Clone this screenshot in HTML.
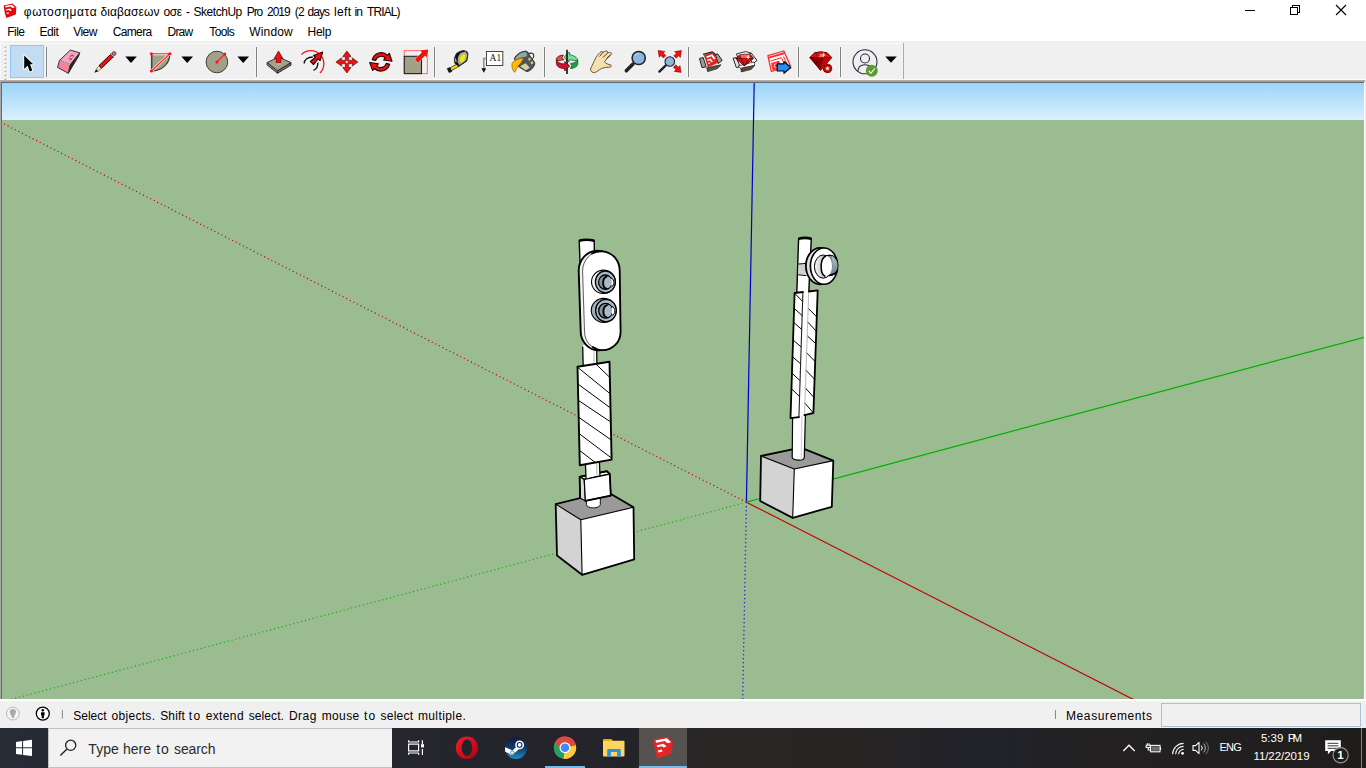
<!DOCTYPE html>
<html lang="en"><head><meta charset="utf-8"><title>SketchUp</title>
<style>
*{box-sizing:border-box;margin:0;padding:0}
html,body{width:1366px;height:768px;overflow:hidden;background:#fff}
body{position:relative;font-family:"Liberation Sans","DejaVu Sans",sans-serif;font-size:12px;color:#000}
.abs{position:absolute}
.t{position:absolute;white-space:nowrap;line-height:1}
#titlebar{left:0;top:0;width:1366px;height:22px;background:#fff}
#menubar{left:0;top:22px;width:1366px;height:19px;background:#fff}
#toolbar{left:0;top:41px;width:1366px;height:38px;background:#f0f0f0}
#vp{left:0;top:80px;width:1366px;height:621px;background:#fff}
#status{left:0;top:701px;width:1366px;height:27px;background:#f0f0f0}
#taskbar{left:0;top:728px;width:1366px;height:40px;background:linear-gradient(90deg,#272b35 0,#24262e 28%,#242329 46%,#2a2625 52%,#282423 62%,#21232a 72%,#232122 80%,#1f1c1c 100%)}
svg{position:absolute;overflow:visible}

</style></head><body>
<div id="titlebar" class="abs"></div>
<svg style="left:0;top:0" width="24" height="22" viewBox="0 0 24 22">
<g id="sulogo">
<polygon points="3.6,5.4 12.4,3.6 16.4,7.2 15.8,14.6 6.4,18 4.9,13.4" fill="#e00b10"/>
<polygon points="5.2,6.1 11.9,4.8 14.9,7.4 12.2,8 10.6,6.6 5.6,7.6" fill="#fff"/>
<polygon points="5.9,9.4 9.9,8.6 11.9,10.4 9.9,10.9 9,10 6.2,10.6" fill="#fff"/>
<polygon points="6.4,12.7 8.6,12.2 9.1,13.4 6.8,14" fill="#fff"/>
</g>
</svg>
<div class="abs" style="left:1245px;top:10px;width:10px;height:1px;background:#000"></div>
<div class="abs" style="left:1292px;top:5px;width:8px;height:8px;border:1px solid #000"></div>
<div class="abs" style="left:1290px;top:7px;width:8px;height:8px;border:1px solid #000;background:#fff"></div>
<svg style="left:1336px;top:5px" width="10" height="10" viewBox="0 0 10 10"><path d="M0,0 L10,10 M10,0 L0,10" stroke="#000" stroke-width="1.1" fill="none"/></svg>

<span class="t" style="left:23.8px;top:6.1px;font-size:12px;letter-spacing:0.57px;color:#000;">φωτοσηματα</span>
<span class="t" style="left:100.6px;top:6.1px;font-size:12px;letter-spacing:0.069px;color:#000;">διαβασεων</span>
<span class="t" style="left:163.4px;top:6.1px;font-size:12px;letter-spacing:-0.419px;color:#000;">οσε</span>
<span class="t" style="left:186.0px;top:6.1px;font-size:12px;letter-spacing:0px;color:#000;">-</span>
<span class="t" style="left:193.5px;top:6.1px;font-size:12px;letter-spacing:-0.462px;color:#000;">SketchUp</span>
<span class="t" style="left:246.7px;top:6.1px;font-size:12px;letter-spacing:-1.044px;color:#000;">Pro</span>
<span class="t" style="left:267.0px;top:6.1px;font-size:12px;letter-spacing:-1.034px;color:#000;">2019</span>
<span class="t" style="left:294.7px;top:6.1px;font-size:12px;letter-spacing:-0.672px;color:#000;">(2</span>
<span class="t" style="left:307.6px;top:6.1px;font-size:12px;letter-spacing:-0.986px;color:#000;">days</span>
<span class="t" style="left:334.0px;top:6.1px;font-size:12px;letter-spacing:0.328px;color:#000;">left</span>
<span class="t" style="left:354.6px;top:6.1px;font-size:12px;letter-spacing:-0.944px;color:#000;">in</span>
<span class="t" style="left:367.0px;top:6.1px;font-size:12px;letter-spacing:-0.883px;color:#000;">TRIAL)</span>
<div id="menubar" class="abs"></div>
<span class="t" style="left:7.2px;top:26.2px;font-size:12px;letter-spacing:-0.515px;color:#000;">File</span>
<span class="t" style="left:39.5px;top:26.2px;font-size:12px;letter-spacing:-0.463px;color:#000;">Edit</span>
<span class="t" style="left:73.3px;top:26.2px;font-size:12px;letter-spacing:-0.566px;color:#000;">View</span>
<span class="t" style="left:112.7px;top:26.2px;font-size:12px;letter-spacing:-0.638px;color:#000;">Camera</span>
<span class="t" style="left:167.5px;top:26.2px;font-size:12px;letter-spacing:-0.772px;color:#000;">Draw</span>
<span class="t" style="left:209.3px;top:26.2px;font-size:12px;letter-spacing:-0.629px;color:#000;">Tools</span>
<span class="t" style="left:249.3px;top:26.2px;font-size:12px;letter-spacing:0.142px;color:#000;">Window</span>
<span class="t" style="left:307.6px;top:26.2px;font-size:12px;letter-spacing:-0.296px;color:#000;">Help</span>
<div id="toolbar" class="abs"></div>
<div class="abs" style="left:0;top:79px;width:1366px;height:1px;background:#fbfbfb"></div>
<div class="abs" style="left:0;top:43px;width:903px;height:1px;background:#f7f9fc"></div>
<div class="abs" style="left:10px;top:45px;width:34px;height:33px;background:#c2ddf3;border:1px solid #90c8f6"></div>
<svg style="left:0;top:42px" width="1366" height="38" viewBox="0 42 1366 38">
<defs>
<linearGradient id="gemg" x1="0" y1="0" x2="1" y2="0"><stop offset="0" stop-color="#7a0000"/><stop offset="1" stop-color="#d01414"/></linearGradient>
</defs>
<!-- grip -->
<g fill="#ababab"><path d="M6.100,45.8 V48 H3.900 Z"/><path d="M6.100,49.8 V52 H3.900 Z"/><path d="M6.100,53.8 V56 H3.900 Z"/><path d="M6.100,57.8 V60 H3.900 Z"/><path d="M6.100,61.8 V64 H3.900 Z"/><path d="M6.100,65.8 V68 H3.900 Z"/><path d="M6.100,69.8 V72 H3.900 Z"/><path d="M6.100,73.8 V76 H3.900 Z"/><path d="M6.100,77.8 V80 H3.900 Z"/></g>
<g fill="#fff"><path d="M3.400,47.4 L5.600,45.2 L5.600,46.0 L3.900,47.7 Z"/><path d="M3.400,51.4 L5.600,49.2 L5.600,50.0 L3.900,51.7 Z"/><path d="M3.400,55.4 L5.600,53.2 L5.600,54.0 L3.900,55.7 Z"/><path d="M3.400,59.4 L5.600,57.2 L5.600,58.0 L3.900,59.7 Z"/><path d="M3.400,63.4 L5.600,61.2 L5.600,62.0 L3.900,63.7 Z"/><path d="M3.400,67.4 L5.600,65.2 L5.600,66.0 L3.900,67.7 Z"/><path d="M3.400,71.4 L5.600,69.2 L5.600,70.0 L3.900,71.7 Z"/><path d="M3.400,75.4 L5.600,73.2 L5.600,74.0 L3.900,75.7 Z"/><path d="M3.400,79.4 L5.600,77.2 L5.600,78.0 L3.900,79.7 Z"/></g>
<rect x="0" y="44" width="1" height="35" fill="#f6f8fc"/>
<rect x="45" y="47" width="3" height="30" fill="#f7f7f7"/><rect x="46" y="47" width="1" height="30" fill="#808080"/><rect x="255" y="47" width="3" height="30" fill="#f7f7f7"/><rect x="256" y="47" width="1" height="30" fill="#808080"/><rect x="433" y="47" width="3" height="30" fill="#f7f7f7"/><rect x="434" y="47" width="1" height="30" fill="#808080"/><rect x="543" y="47" width="3" height="30" fill="#f7f7f7"/><rect x="544" y="47" width="1" height="30" fill="#808080"/><rect x="687" y="47" width="3" height="30" fill="#f7f7f7"/><rect x="688" y="47" width="1" height="30" fill="#808080"/><rect x="797" y="47" width="3" height="30" fill="#f7f7f7"/><rect x="798" y="47" width="1" height="30" fill="#808080"/><rect x="839" y="47" width="3" height="30" fill="#f7f7f7"/><rect x="840" y="47" width="1" height="30" fill="#808080"/>
<rect x="902" y="44" width="1" height="35" fill="#f6f6f6"/><rect x="903" y="43" width="1" height="36" fill="#aaaaaa"/>
<!-- select cursor -->
<path d="M24.200,55.400 L33.200,64.300 L30.100,64.300 L32.200,70.500 L29.800,71.400 L27.600,65.800 L24.200,69 Z" fill="#000" stroke="#fff" stroke-width="1.800" stroke-linejoin="round" paint-order="stroke"/>
<!-- eraser -->
<g stroke="#222" stroke-width="0.900" stroke-linejoin="round">
<polygon points="70.100,64.800 79.700,52.800 78.800,55.800 68.300,73.300" fill="#222"/>
<polygon points="59.500,60.400 70.400,50.100 79.700,52.800 70.100,64.800" fill="#f9a3bf"/>
<polygon points="59.500,60.400 70.100,64.800 68.300,73.300 57.500,67.400" fill="#f8819b"/>
</g>
<path d="M59.800,60.600 L70.100,64.900" stroke="#fde0e8" stroke-width="0.800"/>
<path d="M70.500,55 l3.500,1.200 M69.500,57 l4,-2.500 M68.500,58.200 l3.500,1.200 M72.500,57.500 l-3,3" stroke="#8a3050" stroke-width="0.700" fill="none"/>
<!-- pencil -->
<g>
<path d="M94.300,72.800 L96.100,69.300 L98.300,71.300 Z" fill="#111"/>
<path d="M96.100,69.300 L99,65.600 L101.600,68.100 L98.300,71.300 Z" fill="#e6e2a0" stroke="#333" stroke-width="0.500"/>
<path d="M99,65.600 L110.700,54.300 L113.300,56.900 L101.600,68.100 Z" fill="#f01010" stroke="#300" stroke-width="1"/>
<path d="M110.700,54.300 L112,53.100 L114.600,55.700 L113.300,56.900 Z" fill="#f4f4f4" stroke="#333" stroke-width="0.600"/>
<circle cx="114.100" cy="53.500" r="1.900" fill="#e0687a" stroke="#333" stroke-width="0.700"/>
</g>
<path transform="translate(131 59.700)" d="M-5.800,-3.200 H5.800 L0,3.200 Z" fill="#000"/>
<!-- arc -->
<path d="M151.400,55.200 L169.600,55.200 A18.300,16.400 0 0 1 151.400,71 Z" fill="#a3a08a"/>
<path d="M169.700,55.400 A18.200,16.300 0 0 1 151.800,71" fill="none" stroke="#333" stroke-width="1.100"/>
<path d="M151.700,55 V70.500" fill="none" stroke="#444" stroke-width="1.600"/>
<path d="M169.900,53.700 L151.400,71" fill="none" stroke="#f4ecec" stroke-width="2.600"/>
<path d="M151.400,53.700 H169.900 L151.400,71" fill="none" stroke="#ff2020" stroke-width="1.100"/>
<circle cx="151.400" cy="53.700" r="1.500" fill="#ff1010"/><circle cx="169.900" cy="53.700" r="1.500" fill="#ff1010"/><circle cx="151.400" cy="71" r="1.500" fill="#ff1010"/>
<path transform="translate(187.200 59.700)" d="M-5.800,-3.200 H5.800 L0,3.200 Z" fill="#000"/>
<!-- circle -->
<circle cx="216.900" cy="62" r="10.800" fill="#a3a08a" stroke="#333" stroke-width="0.900"/>
<path d="M216.900,62 L224.800,54" stroke="#ff2020" stroke-width="1.100"/>
<circle cx="216.900" cy="62" r="1.500" fill="#ff1010"/><circle cx="224.800" cy="54" r="1.500" fill="#ff1010"/>
<path transform="translate(243.200 59.700)" d="M-5.800,-3.200 H5.800 L0,3.200 Z" fill="#000"/>
<!-- push pull -->
<g stroke="#222" stroke-width="0.900" stroke-linejoin="round">
<polygon points="267.100,62.500 277.500,70.800 277.500,73.300 267.100,65" fill="#8a8870"/>
<polygon points="277.500,70.800 291,62.600 291,65.100 277.500,73.300" fill="#77755e"/>
<polygon points="267.100,62.500 278.600,57.200 291,62.600 277.500,70.800" fill="#a3a08a"/>
</g>
<path d="M278.500,51.100 L282.900,58.500 L280.700,58.500 L280.700,63.200 L276.400,63.200 L276.400,58.500 L274.200,58.500 Z" fill="#f01010" stroke="#600" stroke-width="0.700"/>
<path d="M276,63.800 H281" stroke="#e8e8e0" stroke-width="0.800"/>
<!-- follow me -->
<path d="M301.500,54.500 A13,13 0 1 1 320,73" fill="none" stroke="#f01820" stroke-width="1.300"/>
<path d="M304.200,63.400 C304.200,59.500 308,57 312.800,57" fill="none" stroke="#111" stroke-width="1.400"/>
<path d="M313.500,70.400 C316.500,69 318,66 317.800,62.600" fill="none" stroke="#111" stroke-width="1.400"/>
<path d="M322.700,52.100 L320.100,60.700 L318,58.800 L313.500,64.600 L310.400,61.500 L315.600,57.300 L313.500,55.600 Z" fill="#f01010" stroke="#200" stroke-width="1.100" stroke-linejoin="round"/>
<!-- move -->
<g fill="#f01010" stroke="#500" stroke-width="0.600" stroke-linejoin="round">
<path d="M346.900,51 L351,56.500 L348.400,56.500 L348.400,60.500 L352.400,60.500 L352.400,57.900 L357.900,62 L352.400,66.100 L352.400,63.500 L348.400,63.500 L348.400,67.500 L351,67.500 L346.900,73 L342.800,67.500 L345.400,67.500 L345.400,63.500 L341.400,63.500 L341.400,66.100 L335.900,62 L341.400,57.900 L341.400,60.500 L345.400,60.500 L345.400,56.500 L342.800,56.500 Z"/>
</g>
<g fill="#fff" stroke="#999" stroke-width="0.400"><rect x="342.200" y="57.300" width="2.400" height="2.400"/><rect x="349.200" y="57.300" width="2.400" height="2.400"/><rect x="342.200" y="64.300" width="2.400" height="2.400"/><rect x="349.200" y="64.300" width="2.400" height="2.400"/><rect x="345.900" y="61" width="2" height="2"/></g>
<!-- rotate -->
<g fill="#f01010" stroke="#200" stroke-width="1.100" stroke-linejoin="round">
<path d="M372.300,59.600 A9.200,9.200 0 0 1 387.600,55.300 L389.300,53.300 L392,61.300 L383.600,60 L385.300,57.900 A5.800,5.800 0 0 0 375.700,60.400 Z"/>
<path d="M389.700,64.200 A9.200,9.200 0 0 1 374.400,68.500 L372.700,70.500 L369.700,62.500 L378.400,63.800 L376.700,65.900 A5.800,5.800 0 0 0 386.300,63.400 Z"/>
</g>
<!-- scale -->
<rect x="404.300" y="50.600" width="23" height="23" fill="none" stroke="#ff6a6a" stroke-width="1"/>
<rect x="404.300" y="56.300" width="17.200" height="17.300" fill="#a3a08a" stroke="#222" stroke-width="1.100"/>
<path d="M428.100,49.400 L427,57.500 L425.100,55.600 L418,62.700 L414.800,59.500 L421.900,52.400 L420,50.500 Z" fill="#f01010" stroke="#fff" stroke-width="0.700" stroke-linejoin="round" paint-order="stroke"/>
<!-- tape -->
<g stroke-linejoin="round">
<path d="M457.200,64 L449.600,68.200 L451,70.800 L458.800,66.400 Z" fill="#f4e800" stroke="#222" stroke-width="0.800"/>
<path d="M447.200,68.600 L450,67.600 L451.800,71.600 L449,72.600 Z" fill="#111" stroke="#111" stroke-width="0.600"/>
<path d="M454.400,58.400 L456.400,53.500 Q459,51.300 463.400,50.500 L466.900,51.500 Q468,52.500 467.900,54.500 L466.900,60.900 L458.900,66.400 L454.900,63.400 Z" fill="#111" stroke="#111" stroke-width="0.800"/>
<path d="M457.900,57.400 L459.900,53.500 Q462,52 465.900,51.600 L467.300,54.500 L466.300,60.300 L459.500,65.200 L457.700,62.400 Z" fill="#a8a8a8"/>
<ellipse cx="462.600" cy="58.300" rx="2.500" ry="4.300" transform="rotate(24 462.600 58.300)" fill="#f4e800"/>
<path d="M455,58.600 L456,58.200 L456.600,62 L455.600,62.300 Z" fill="#f4e800"/>
</g>
<!-- text tool -->
<rect x="486.500" y="51.500" width="16.300" height="14" fill="#fff" stroke="#444" stroke-width="1"/>
<path d="M486.500,58.500 H483.800 V69" fill="none" stroke="#8c8c8c" stroke-width="1.500"/>
<path d="M481.400,68.300 H486.200 L483.800,72.800 Z" fill="#111"/>
<text x="489.600" y="61" font-family="Liberation Serif,serif" font-size="9.500" fill="#222">A1</text>
<!-- paint bucket -->
<g stroke-linejoin="round">
<path d="M529,53.600 C531,52.500 533.700,53.400 533.800,55.400 C533.900,56.800 533.100,58 532.500,58.700" fill="none" stroke="#222" stroke-width="1.100"/>
<path d="M514.400,58.600 C515.500,55 521,51.200 525.500,51.200 C527.500,51.200 528.300,52.500 528.600,54 L534.600,62.500 C535.500,65 531,71.500 526.600,71.600 L518.500,66.500 Z" fill="#50545a" stroke="#2a2c30" stroke-width="1"/>
<path d="M515.300,58.400 C517,55 521.500,52.300 525.200,52.300 C527.300,52.500 527.300,54.500 526.800,56.300 C523,57 518.500,58.500 516,59.500 Z" fill="#8fa8a0"/>
<path d="M520,66.300 L525.700,63.200 L529.800,67.700 L525.700,70.300 Z" fill="#ddd39a"/>
<path d="M528,58.600 L530.600,57.600 L530.800,59.800 L528.800,61 Z" fill="#cfc08a"/>
<path d="M530.400,62 L532.800,61 L533.300,63.800 L531.200,64.400 Z" fill="#cfc08a"/>
<path d="M523.600,58 C519.500,58.200 515,59.600 512.600,62.400 C510.800,65 512.600,70.800 514.600,72.300 C516,71 516.600,67.800 518.200,66 C520,64 522.600,61 523.600,58 Z" fill="#ffb800" stroke="#7a5000" stroke-width="0.600"/>
</g>
<!-- orbit -->
<g stroke-linejoin="round">
<path d="M556.300,58.500 C557.200,56.600 560,55.200 563.400,55 L561.800,57.700 L564,59.750 C561,60.300 558.500,60.800 557,60.400 Z" fill="#e2503e" stroke="#500" stroke-width="0.700"/>
<path d="M564,57.250 L568.800,52.250 L569.700,52.500 L569.700,54.750 C573.500,55.200 577.200,57.400 577.800,60.200 C576,60.700 572.500,60.200 568.800,60 L568.800,62.250 Z" fill="#72e096" stroke="#052" stroke-width="0.700"/>
<rect x="566.200" y="49.800" width="1.600" height="24.200" fill="#111"/>
<path d="M577.800,60.200 L577.800,64.300 C577.300,66.500 574.500,68.200 570.500,68.700 L571.750,65.600 L570.500,63.500 C573,63.300 576,62 577.800,60.200 Z" fill="#1fa040" stroke="#052" stroke-width="0.700"/>
<path d="M556.300,59.750 L556.500,64.300 C557,66.600 560,68.400 564.700,68.700 L564.700,71 L569.700,66 L564.700,61.400 L564.700,63.900 C561,63.800 558,62.800 556.300,59.750 Z" fill="#d01030" stroke="#400" stroke-width="0.700"/>
</g>
<!-- pan hand -->
<path d="M590.500,69 C592,66 594,61 596,57.500 C597.500,55 599.500,52.500 601.500,51.500 C602.500,51.200 603,52 602.500,52.800 C604,51.500 606,50.800 607,51.200 C608,51.500 608.200,52.300 607.500,53 C609,52.300 610.500,52.300 611.300,52.900 C612,53.500 611.500,54.300 610.800,54.800 C608.500,57 606,59.500 604.500,62 C606,63.500 608,64.500 610.500,64.800 C611.500,65 611.500,66.500 610.500,67 C607,67.500 604,67.300 601.500,68.500 C599,69.800 597,72 594.500,72.600 C592.500,72.800 590.500,71.500 590.500,69 Z" fill="#f5e1b0" stroke="#5a4526" stroke-width="0.900" stroke-linejoin="round"/>
<path d="M602.500,52.800 L599.500,56.500 M607.500,53 L603,57.500 M610.800,54.800 L606.500,58.600" stroke="#3a2c18" stroke-width="0.900" fill="none"/>
<!-- zoom -->
<path d="M633,64 L626.300,70.800" stroke="#222" stroke-width="3.500" stroke-linecap="round"/>
<circle cx="638.700" cy="58" r="6.600" fill="#8cb6de" stroke="#222" stroke-width="1.500"/>
<path d="M635,56 A4,4 0 0 1 639,53.500" stroke="#b8d6f0" stroke-width="1" fill="none"/>
<!-- zoom extents -->
<path d="M665.600,65.600 L659.400,71.600" stroke="#222" stroke-width="2.400" stroke-linecap="round"/>
<circle cx="669.800" cy="61.500" r="4.800" fill="#8cb6de" stroke="#222" stroke-width="1.100"/>
<g fill="#f01010" stroke="#600" stroke-width="0.500" stroke-linejoin="round">
<path d="M658.100,50.400 L665,51.400 L663.300,53.100 L665.800,55.600 L663.400,58 L660.900,55.500 L659.200,57.200 Z"/>
<path d="M681.400,50.500 L680.400,57.400 L678.700,55.700 L676.200,58.200 L673.800,55.800 L676.300,53.300 L674.600,51.600 Z"/>
<path d="M681.100,72.400 L674.200,71.400 L675.900,69.700 L673.400,67.200 L675.800,64.800 L678.300,67.300 L680,65.600 Z"/>
</g>
<!-- 3d warehouse -->
<g stroke-linejoin="round">
<path d="M703,54.200 L712.400,51.900 L716,54.600 L705,58" fill="#8a8878" stroke="#222" stroke-width="1.100"/>
<path d="M699.500,58.400 L703.200,57.600 L706.200,66.900 L702,67.600 Z" fill="#a09e8c" stroke="#222" stroke-width="1"/>
<path d="M715.600,54.600 L717.600,53.800 L722.200,60.400 L718,63.600 Z" fill="#a09e8c" stroke="#222" stroke-width="1"/>
<path d="M706.800,67.800 L721,64.800 L717.400,68.600 L707.600,71.600 Z" fill="#55534a" stroke="#222" stroke-width="0.800"/>
<path d="M704.600,55.600 L712.900,52.500 L717.400,60.200 L716.400,63.600 L707.900,67 Z" fill="#e22426" stroke="#a01010" stroke-width="0.400"/>
<path d="M706.200,56.400 L712.300,54.200 L715.600,58.800 L713.800,59.400 L711.600,56.200 L706.800,57.900 Z M707.200,59.600 L710.600,58.500 L713,61.800 L711.400,62.300 L709.900,60.200 L707.600,60.900 Z M708,62.700 L709.600,62.200 L710.200,63.600 L708.500,64.100 Z" fill="#fff"/>
</g>
<!-- extension warehouse -->
<g stroke-linejoin="round">
<path d="M736.300,54 L745.800,51.500 L751.200,53.200 L738,57.500 Z" fill="#f4f4f4" stroke="#222" stroke-width="0.900"/>
<path d="M733.100,58.200 L736.300,57.700 L740.300,66.900 L736.300,67.500 Z" fill="#e4e4e4" stroke="#222" stroke-width="1"/>
<path d="M751.200,53 L757,60.400 L753.200,63.600 L748,57 Z" fill="#f8f8f8" stroke="#222" stroke-width="1"/>
<path d="M738,66 L754,62 L754.700,65.400 L740.800,68.400 Z" fill="#fff" stroke="#222" stroke-width="0.700"/>
<path d="M740.800,68.400 L754.700,65.400 L751.200,69.400 L741.300,71.900 Z" fill="#554a3a" stroke="#222" stroke-width="0.700"/>
<path d="M739.600,55 Q745.200,53.200 750.800,55 L753.500,58.400 L744.300,65.900 L735.800,58.400 Z" fill="#e01010" stroke="#300" stroke-width="0.800"/>
<path d="M739.600,55 Q745.200,53.400 750.800,55 L749,58.400 L741,58.400 Z" fill="#f0686f"/>
<path d="M735.800,58.400 H753.500 M741,58.400 L744.300,65.900 L749,58.400 M739.600,55 L741,58.400 M750.800,55 L749,58.400" fill="none" stroke="#400" stroke-width="0.600"/>
<path d="M747.400,56.600 L748.200,54.600 L749,56.600 L750.800,57.200 L749,57.800 L748.200,59.600 L747.400,57.800 L745.800,57.200 Z" fill="#ffe8c0"/>
</g>
<!-- layout -->
<g stroke-linejoin="round">
<path d="M767.900,55.600 L783.800,51 L790.400,65.700 L771.400,71.500 Z" fill="#fff" stroke="#ff2a2a" stroke-width="1.300"/>
<path d="M768.600,56.800 L784,52.300 L784.800,54 L769.300,58.600 Z" fill="#ff2a2a"/>
<path d="M770.500,61 L781.500,57.700 M781.500,57.700 L785.500,67 M783.500,56.500 L788,66" stroke="#ff2a2a" stroke-width="1" fill="none"/>
<path d="M771.200,63 L779,60.700 L781.800,68 L772.600,70.600 Z" fill="#ff2a2a"/>
<circle cx="776.200" cy="65.600" r="2" fill="none" stroke="#fff" stroke-width="0.800"/>
<path d="M777.200,63.800 H784 V61.500 L790.800,67.500 L784,73.300 V71 H777.200 Z" fill="#1e90ff" stroke="#080808" stroke-width="1.200"/>
</g>
<!-- ruby gear -->
<g stroke-linejoin="round">
<path d="M814.500,52.800 Q820.800,50.600 827.200,52.800 L831.800,57.600 L820.600,70.400 L809.700,57.600 Z" fill="#e01010" stroke="#400" stroke-width="0.800"/>
<path d="M809.700,57.600 L820.600,70.400 L818,57.600 Z" fill="#7a0000"/>
<path d="M831.800,57.600 L820.600,70.400 L823.500,57.600 Z" fill="#b80c0c"/>
<path d="M818,57.600 L820.600,70.400 L823.500,57.600 Z" fill="#8c0000"/>
<path d="M818,57.600 L820.800,53 L823.500,57.600 Z" fill="#f46a78"/>
<path d="M809.700,57.600 H831.800 M815.500,51.800 L818,57.600 M826.400,51.800 L823.500,57.600" fill="none" stroke="#500" stroke-width="0.500"/>
<path d="M822.500,54.500 L823.500,52.300 L824.500,54.500 L826.500,55 L824.500,55.600 L823.500,57.500 L822.600,55.600 L820.800,55 Z" fill="#ffe8c0"/>
<circle cx="827.500" cy="68.400" r="4.600" fill="#3a0000"/>
<circle cx="827.500" cy="68.400" r="4.100" fill="none" stroke="#d81414" stroke-width="1.400" stroke-dasharray="1.700 1.520"/>
<circle cx="827.500" cy="68.400" r="2.500" fill="#fff" stroke="#d81414" stroke-width="1.500"/>
<circle cx="827.500" cy="68.400" r="1.300" fill="#fff" stroke="#500" stroke-width="0.400"/>
</g>
<!-- user -->
<circle cx="865" cy="61.800" r="12" fill="none" stroke="#2a2a44" stroke-width="1.100"/>
<circle cx="865" cy="58.500" r="4.500" fill="none" stroke="#2a2a44" stroke-width="1.100"/>
<path d="M857.800,71.400 C858,67 861,64.700 865,64.700 C869,64.700 872,67 872.200,71.400" fill="none" stroke="#2a2a44" stroke-width="1.100"/>
<circle cx="871.800" cy="70.800" r="6" fill="#5a9c30"/>
<path d="M868.800,70.900 L870.900,73.100 L874.800,68.500" fill="none" stroke="#fff" stroke-width="1.100"/>
<path transform="translate(891 59.600)" d="M-5.800,-3.200 H5.800 L0,3.200 Z" fill="#000"/>
</svg>

<div id="vp" class="abs">
<div class="abs" style="left:0;top:0;width:1366px;height:1px;background:#b0b0b0"></div>
<div class="abs" style="left:0;top:1px;width:1365px;height:1px;background:#a0a0a0"></div>
<div class="abs" style="left:1px;top:2px;width:1363px;height:1px;background:#696969"></div>
<div class="abs" style="left:0;top:1px;width:1px;height:618px;background:#a8a8a8"></div>
<div class="abs" style="left:1px;top:2px;width:1px;height:617px;background:#696969"></div>
<div class="abs" style="left:1365px;top:0;width:1px;height:621px;background:#ececec"></div>
<svg style="left:2px;top:3px" width="1362" height="616" viewBox="2 83 1362 616">
<defs>
<linearGradient id="sky" x1="0" y1="0" x2="0" y2="1"><stop offset="0" stop-color="#9bd5fa"/><stop offset="1" stop-color="#dbf0fc"/></linearGradient>
<clipPath id="vpc"><rect x="2" y="83" width="1362" height="616"/></clipPath>
</defs>
<g clip-path="url(#vpc)">
<rect x="2" y="83" width="1362" height="37" fill="url(#sky)"/>
<rect x="2" y="120" width="1362" height="579" fill="#9bbb91"/>
<line x1="746.4" y1="502.2" x2="754.2" y2="83" stroke="#0000c0" stroke-width="1.200"/>
<line x1="746.4" y1="502.2" x2="742.7" y2="700" stroke="#0000c0" stroke-width="1.300" stroke-dasharray="1.100 2.900"/>
<line x1="746.4" y1="502.2" x2="1133.5" y2="699.5" stroke="#c00000" stroke-width="1.200"/>
<line x1="746.4" y1="502.2" x2="0" y2="122" stroke="#c00000" stroke-width="1.200" stroke-dasharray="1.100 2.900"/>
<line x1="746.4" y1="502.2" x2="1366" y2="336.8" stroke="#00b000" stroke-width="1.200"/>
<line x1="746.4" y1="502.2" x2="9" y2="700" stroke="#00b000" stroke-width="1.200" stroke-dasharray="1.100 2.900"/>
<g id="modelL" stroke-linejoin="round" stroke-linecap="round">
<!-- cube -->
<polygon points="555.7,504.1 606.7,491.5 633.5,507.3 580.8,519.7" fill="#9a9a9a"/>
<polygon points="555.7,504.1 580.8,519.7 582.1,574.8 557,555.5" fill="#d3d3d3"/>
<polygon points="580.8,519.7 633.5,507.3 634.2,559.4 582.1,574.8" fill="#ffffff"/>
<polyline points="555.7,504.1 580.8,519.7 633.5,507.3" fill="none" stroke="#000" stroke-width="1.1"/>
<line x1="580.8" y1="519.7" x2="582.1" y2="574.8" stroke="#000" stroke-width="1.1"/>
<polygon points="555.7,504.1 606.7,491.5 633.5,507.3 634.2,559.4 582.1,574.8 557,555.5" fill="none" stroke="#000" stroke-width="1.800"/>
<!-- pole stub bottom -->
<path d="M586.4,496 L586.4,504.5 A6.95,3.4 0 0 0 600.3,504.5 L600.3,494 Z" fill="#fff" stroke="#000" stroke-width="0.9"/>
<!-- small box -->
<polygon points="579.6,476.8 606.9,471.2 609.8,474.2 584.2,479.4" fill="#f4f4f4" stroke="#000" stroke-width="1.6"/>
<polygon points="579.6,476.8 584.2,479.4 585.4,500.8 580.2,498.2" fill="#dcdcdc" stroke="#000" stroke-width="1.2"/>
<polygon points="584.2,479.4 609.8,474.2 610.8,495.6 585.4,500.8" fill="#fff" stroke="#000" stroke-width="1.2"/>
<polyline points="580.2,498.2 579.6,476.8 606.9,471.2 609.8,474.2 610.8,495.6 585.4,500.8" fill="none" stroke="#000" stroke-width="1.8"/>
<!-- pole between board and box -->
<polygon points="585.4,462 599.4,460 599.9,474.5 586,478.6" fill="#fff"/>
<line x1="585.4" y1="463" x2="586" y2="478" stroke="#000" stroke-width="1.3"/>
<line x1="599.4" y1="461" x2="599.9" y2="474.8" stroke="#000" stroke-width="1.3"/>
<line x1="596.6" y1="462" x2="597" y2="475" stroke="#c8c8c8" stroke-width="1.5"/>
<!-- pole between head and board -->
<polygon points="582.4,345 596.6,345 596.9,364.5 583.2,366.5" fill="#fff"/>
<line x1="582.700" y1="347" x2="583.200" y2="366.500" stroke="#000" stroke-width="1.300"/>
<line x1="596.6" y1="345" x2="596.9" y2="364" stroke="#000" stroke-width="1.3"/>
<line x1="593.8" y1="350" x2="594" y2="364" stroke="#cfcfcf" stroke-width="1.5"/>
<!-- board -->
<polygon points="577.5,366.7 609.5,361.7 611.6,459.6 579.8,465.3" fill="#fff"/>
<g stroke="#000" stroke-width="1" fill="none">
<line x1="596" y1="364.2" x2="609.7" y2="377.3"/>
<line x1="577.8" y1="367.4" x2="610.1" y2="393.7"/>
<line x1="578.2" y1="384.2" x2="610.4" y2="407.9"/>
<line x1="578.6" y1="400.5" x2="610.7" y2="422"/>
<line x1="579" y1="417.5" x2="611" y2="439.8"/>
<line x1="579.4" y1="433.8" x2="611.4" y2="458"/>
<line x1="579.7" y1="450.5" x2="595" y2="462.3"/>
</g>
<polygon points="577.5,366.7 609.5,361.7 611.6,459.6 579.8,465.3" fill="none" stroke="#000" stroke-width="1.900"/>
<!-- pole top -->
<polygon points="579.2,240.3 594.2,240.3 594.4,262 580,262" fill="#fff"/>
<line x1="579.2" y1="240.5" x2="580" y2="262" stroke="#000" stroke-width="1.4"/>
<line x1="594.2" y1="240.5" x2="594.4" y2="255" stroke="#000" stroke-width="1.4"/>
<path d="M579.200,240.800 Q586.700,238.800 594.200,240.800" fill="none" stroke="#000" stroke-width="2.600" stroke-linecap="butt"/>
<!-- head back -->
<path d="M578.700,270.500 C578.700,259.700 587,250.700 597.500,250.700 C607.500,250.700 616,259.700 616,270.500 L617,331.500 C617,342 608.500,350.300 598.800,350.300 C589,350.300 580.700,342 580.700,331.500 Z" fill="#f2f2f2" stroke="#000" stroke-width="1.900"/>
<!-- head front -->
<path d="M582.600,270.700 C582.600,260 591,251.300 601.400,251.300 C611.500,251.300 619.700,260 619.700,270.700 L620.600,332 C620.600,342.300 612.300,350.200 602.700,350.200 C593,350.200 584.500,342.300 584.500,332 Z" fill="#fff" stroke="#333" stroke-width="0.800"/>
<path d="M592,253.400 C595,251.900 598,251.300 601.400,251.300 C611.500,251.300 619.700,260 619.700,270.700 L620.600,332 C620.600,342.300 612.300,350.200 602.700,350.200 C599,350.200 595.500,349 592.700,347" fill="none" stroke="#000" stroke-width="1.800"/>
<!-- lights -->
<g id="lt1">
<ellipse cx="603.4" cy="281.8" rx="11.9" ry="11.7" fill="#f6f6f6" stroke="#000" stroke-width="1.1"/>
<ellipse cx="605.4" cy="281.9" rx="10" ry="10.9" fill="#a9bac6" stroke="#000" stroke-width="1.300"/>
<ellipse cx="605.3" cy="282.2" rx="6.7" ry="7.2" fill="#8595a2" stroke="#000" stroke-width="1.300"/>
<path d="M611.2,278.5 L613.6,280 L613.8,285 L611.2,285.6 Z" fill="#fff" stroke="none"/>
<ellipse cx="607.700" cy="282.300" rx="3.800" ry="5.700" fill="#a9bac6" stroke="none"/>
<path d="M606.6,276.6 C602,278 602,287.5 606.2,288.7" fill="none" stroke="#000" stroke-width="1.900"/>
<path d="M611.4,278 C614.6,279.5 614.8,285 612,286.6" fill="none" stroke="#000" stroke-width="1"/>
</g>
<g id="lt2">
<ellipse cx="603.6" cy="310.4" rx="12.3" ry="12" fill="#9fb0bc" stroke="#000" stroke-width="1.1"/>
<ellipse cx="606" cy="310.6" rx="10.4" ry="11.2" fill="#a9bac6" stroke="#000" stroke-width="1.300"/>
<ellipse cx="605.6" cy="310.8" rx="6.9" ry="7.4" fill="#8595a2" stroke="#000" stroke-width="1.300"/>
<path d="M612,307 L614.6,308.6 L614.8,313.6 L612,314.2 Z" fill="#fff" stroke="none"/>
<ellipse cx="608.200" cy="310.900" rx="3.900" ry="5.800" fill="#a9bac6" stroke="none"/>
<path d="M607,305.1 C602.2,306.6 602.2,316.2 606.6,317.4" fill="none" stroke="#000" stroke-width="1.900"/>
<path d="M612.2,306.4 C615.6,308 615.8,313.6 612.8,315.2" fill="none" stroke="#000" stroke-width="1"/>
</g>
</g>

<g id="modelR" stroke-linejoin="round" stroke-linecap="round">
<defs><linearGradient id="tubeg" x1="0" y1="0" x2="1" y2="0"><stop offset="0" stop-color="#f4f4f4"/><stop offset="0.5" stop-color="#c8c8c8"/><stop offset="1" stop-color="#e8e8e8"/></linearGradient><linearGradient id="tubeb" x1="0" y1="0" x2="0" y2="1"><stop offset="0" stop-color="#b4c0ca"/><stop offset="1" stop-color="#6f8190"/></linearGradient></defs>
<!-- cube -->
<polygon points="761,456 800.8,447.7 833.3,460.6 794.3,469" fill="#9a9a9a"/>
<polygon points="761,456 794.3,469 792.7,517.9 760.2,501" fill="#d3d3d3"/>
<polygon points="794.3,469 833.3,460.6 831.8,506.8 792.7,517.9" fill="#ffffff"/>
<polyline points="761,456 794.3,469 833.3,460.6" fill="none" stroke="#000" stroke-width="1.1"/>
<line x1="794.3" y1="469" x2="792.7" y2="517.9" stroke="#000" stroke-width="1.1"/>
<polygon points="761,456 800.8,447.7 833.3,460.6 831.8,506.8 792.7,517.9 760.2,501" fill="none" stroke="#000" stroke-width="1.800"/>
<!-- lower pole -->
<path d="M792.700,414 L792.200,457 A6.050,2.800 0 0 0 804.300,457.600 L805.500,412 Z" fill="#fff"/>
<path d="M792.600,417.500 L792.200,457 A6.050,2.800 0 0 0 804.300,457.600 L805.400,414.500" fill="none" stroke="#000" stroke-width="1.200"/>
<path d="M801.800,416 L801.300,459" fill="none" stroke="#d8d8d8" stroke-width="1.400"/>
<!-- upper pole -->
<polygon points="798.6,238.4 811.3,238.4 808.5,296 796.6,296" fill="#fff"/>
<line x1="798.6" y1="238.6" x2="796.8" y2="293" stroke="#000" stroke-width="1.4"/>
<line x1="811.3" y1="238.6" x2="808.8" y2="292" stroke="#000" stroke-width="1.4"/>
<path d="M798.6,238.700 Q805,237 811.300,238.700" fill="none" stroke="#000" stroke-width="2.600" stroke-linecap="butt"/>
<rect x="798.8" y="264" width="7" height="10.5" fill="#d0d0d0"/>
<line x1="798.8" y1="264" x2="806" y2="263.4" stroke="#000" stroke-width="1"/>
<line x1="798.5" y1="274.8" x2="806" y2="275.6" stroke="#000" stroke-width="1"/>
<!-- board pieces -->
<polygon points="794.6,293 802.9,292 798.9,417.2 790.5,418.2" fill="#fff"/>
<polygon points="808.9,291.5 817.7,290.4 813.4,413 804.4,415.1" fill="#fff"/>
<polygon points="802.9,292 808.9,291.5 804.4,415.1 798.9,417.2" fill="#fff"/>
<g stroke="#000" stroke-width="1" fill="none">
<line x1="795.6" y1="294.3" x2="802.6" y2="301.4"/>
<line x1="794.3" y1="308.4" x2="802.2" y2="315.6"/>
<line x1="793.9" y1="322.6" x2="801.7" y2="329.4"/>
<line x1="793.3" y1="340.2" x2="801.1" y2="346.9"/>
<line x1="792.8" y1="357.1" x2="800.5" y2="363.6"/>
<line x1="792.2" y1="373.4" x2="800" y2="380.7"/>
<line x1="791.7" y1="389" x2="799.4" y2="396.4"/>
<line x1="808.3" y1="308.4" x2="816.6" y2="316.8"/>
<line x1="807.8" y1="322.1" x2="816.1" y2="331"/>
<line x1="807.3" y1="335.8" x2="815.7" y2="343.6"/>
<line x1="806.6" y1="352.8" x2="815.1" y2="361.5"/>
<line x1="806" y1="370.3" x2="814.5" y2="379.2"/>
<line x1="805.4" y1="388" x2="813.9" y2="397.4"/>
<line x1="804.8" y1="403.1" x2="812.6" y2="412"/>
</g>
<line x1="802.9" y1="292" x2="798.9" y2="417.2" stroke="#222" stroke-width="1.1"/>
<line x1="808.7" y1="291.5" x2="804.5" y2="415" stroke="#bbb" stroke-width="1"/>
<polyline points="802.9,292 794.6,293 790.5,418.2 798.9,417.2" fill="none" stroke="#000" stroke-width="1.800"/>
<polyline points="808.9,291.5 817.7,290.4 813.4,413 804.4,415.1" fill="none" stroke="#000" stroke-width="1.800"/>
<!-- ring -->
<ellipse cx="820.100" cy="266.100" rx="14.200" ry="18.200" fill="#dedede" stroke="#000" stroke-width="1.800"/>
<ellipse cx="824" cy="266.100" rx="13.600" ry="18.100" fill="#fff" stroke="#000" stroke-width="1.600"/>
<ellipse cx="823.300" cy="266.600" rx="8.900" ry="11.600" fill="url(#tubeg)" stroke="#000" stroke-width="1"/>
<ellipse cx="829.500" cy="265.300" rx="8.100" ry="10.200" fill="#7d8e9b" stroke="#000" stroke-width="1.300"/>
<path d="M831.500,255.500 C836,258 838,262 837.600,266.500 C837.300,270 835.500,273 833,274.500 L831,273.500 C832.500,270 833,266 832.500,262 C832.200,259.500 832,257.500 831.500,255.500 Z" fill="url(#tubeb)"/>
<ellipse cx="826.400" cy="266.100" rx="5.600" ry="10.100" fill="#fff"/>
<path d="M825.500,256.200 C820,258.500 819.600,273.500 824.800,276.200" fill="none" stroke="#000" stroke-width="1.500"/>
<path d="M830,275.200 C833,275 835.500,273.500 837,271.500" fill="none" stroke="#000" stroke-width="1.400"/>
</g>

</g>
</svg>
</div>

<div id="status" class="abs"></div>
<div class="abs" style="left:0;top:699px;width:1366px;height:2px;background:#fff"></div>
<svg style="left:0;top:701px" width="70" height="27" viewBox="0 701 70 27">
<circle cx="12.9" cy="713.6" r="6.4" fill="#f4f4f4" stroke="#b4b4b4" stroke-width="0.9"/>
<path d="M12.9,709 a3.1,3.1 0 0 1 3.1,3.1 c0,1.8 -1.6,2.6 -2.2,5.8 h-1.8 c-0.6,-3.2 -2.2,-4 -2.2,-5.8 a3.1,3.1 0 0 1 3.1,-3.100 z" fill="#aaa"/>
<circle cx="42.8" cy="713.6" r="6.5" fill="#fff" stroke="#000" stroke-width="1.3"/>
<circle cx="42.8" cy="710.3" r="1.3" fill="#000"/>
<path d="M41,712.300 h3.600 v3 h-0.700 v3 h-2.200 v-3 h-0.700 z" fill="#000"/>
<rect x="61.9" y="709.8" width="1" height="8.8" fill="#8a8a8a"/>
</svg>
<div class="abs" style="left:1055px;top:710px;width:1px;height:9px;background:#8a8a8a"></div>
<div class="abs" style="left:1161px;top:703px;width:200px;height:24px;border:1px solid #adc0da;background:#f0f0f0"></div>

<span class="t" style="left:73.2px;top:709.6px;font-size:12px;letter-spacing:0.028px;color:#000;">Select</span>
<span class="t" style="left:111.5px;top:709.6px;font-size:12px;letter-spacing:0.306px;color:#000;">objects.</span>
<span class="t" style="left:160.2px;top:709.6px;font-size:12px;letter-spacing:0.146px;color:#000;">Shift</span>
<span class="t" style="left:188.8px;top:709.6px;font-size:12px;letter-spacing:1.284px;color:#000;">to</span>
<span class="t" style="left:205.7px;top:709.6px;font-size:12px;letter-spacing:0.374px;color:#000;">extend</span>
<span class="t" style="left:248.8px;top:709.6px;font-size:12px;letter-spacing:0.069px;color:#000;">select.</span>
<span class="t" style="left:288.9px;top:709.6px;font-size:12px;letter-spacing:0.495px;color:#000;">Drag</span>
<span class="t" style="left:321.7px;top:709.6px;font-size:12px;letter-spacing:0.367px;color:#000;">mouse</span>
<span class="t" style="left:363.9px;top:709.6px;font-size:12px;letter-spacing:1.384px;color:#000;">to</span>
<span class="t" style="left:380.6px;top:709.6px;font-size:12px;letter-spacing:0.228px;color:#000;">select</span>
<span class="t" style="left:417.9px;top:709.6px;font-size:12px;letter-spacing:0.402px;color:#000;">multiple.</span>
<span class="t" style="left:1066.0px;top:709.6px;font-size:12px;letter-spacing:0.602px;color:#000;">Measurements</span>
<div id="taskbar" class="abs"></div>
<div class="abs" style="left:48px;top:728px;width:344px;height:40px;background:#f2f2f2;border:1px solid #c2c2c2;border-right:none"></div>
<div class="abs" style="left:639px;top:728px;width:48px;height:38px;background:#56524f"></div>
<div class="abs" style="left:639px;top:766px;width:48px;height:2px;background:#76b9ed"></div>
<div class="abs" style="left:545px;top:766px;width:40px;height:2px;background:#76b9ed"></div>
<svg style="left:0;top:728px" width="1366" height="40" viewBox="0 728 1366 40">
<defs>
<linearGradient id="opg" x1="0" y1="0" x2="1" y2="1"><stop offset="0" stop-color="#ff1b2d"/><stop offset="1" stop-color="#a70014"/></linearGradient>
<linearGradient id="stg" x1="0" y1="0" x2="0" y2="1"><stop offset="0" stop-color="#101a3c"/><stop offset="0.5" stop-color="#13376b"/><stop offset="1" stop-color="#1a8fc6"/></linearGradient>
</defs>
<!-- windows logo -->
<polygon points="16,741.9 22.1,741 22.1,747.3 16,747.3" fill="#fff"/>
<polygon points="23.1,740.9 32,739.8 32,747.3 23.1,747.3" fill="#fff"/>
<polygon points="16,748.3 22.1,748.3 22.1,754.8 16,753.9" fill="#fff"/>
<polygon points="23.1,748.3 32,748.3 32,756.1 23.1,754.9" fill="#fff"/>
<!-- search icon -->
<circle cx="70.7" cy="745.3" r="5.1" fill="none" stroke="#222" stroke-width="1.3"/>
<line x1="67" y1="749" x2="60.3" y2="755.6" stroke="#222" stroke-width="1.4"/>
<!-- task view -->
<g fill="none" stroke="#fff" stroke-width="1.2">
<rect x="408.6" y="744.1" width="10" height="6.8"/>
<path d="M408.6,742.3 v-2 M418.6,742.3 v-2 M408.3,742 h10.600 M408.6,752.700 v2 M418.600,752.700 v2 M408.300,753 h10.600"/>
<path d="M422.400,740.200 v4 M422.400,749 v6"/>
</g>
<rect x="421" y="744.200" width="3" height="3.2" fill="#fff"/>
<!-- opera -->
<ellipse cx="466.900" cy="747.700" rx="11.100" ry="11.300" fill="url(#opg)"/>
<ellipse cx="466.900" cy="747.700" rx="5.300" ry="8.300" fill="#23242b"/>
<!-- steam -->
<circle cx="515.900" cy="747.900" r="11" fill="url(#stg)"/>
<circle cx="519.600" cy="744.900" r="3.700" fill="none" stroke="#fff" stroke-width="1.500"/>
<circle cx="519.600" cy="744.900" r="1.800" fill="#fff"/>
<path d="M505,747.300 L512.500,750.400 L516.400,746.800 L518.800,749.400 L514.600,752.700 A2.800,2.800 0 0 1 509.300,753.500 L505.200,751.800 Z" fill="#fff"/>
<circle cx="512.200" cy="752.600" r="1.700" fill="none" stroke="#1a5a90" stroke-width="0.700"/>
<!-- chrome -->
<circle cx="565" cy="747.700" r="11.200" fill="#dd4b3e"/>
<path d="M565,747.700 L555.300,742.100 A11.200,11.200 0 0 0 563.500,758.800 L569.500,749.700 Z" fill="#1da362"/>
<path d="M565,747.700 L563.500,758.800 A11.200,11.200 0 0 0 575.900,745.200 L566,743 Z" fill="#fdcb3f"/>
<path d="M565,747.700 L575.900,745.200 A11.200,11.200 0 0 0 555.300,742.100 L560,750 Z" fill="#dd4b3e"/>
<circle cx="565" cy="747.700" r="5.500" fill="#fff"/>
<circle cx="565" cy="747.700" r="4.300" fill="#4688f1"/>
<!-- explorer -->
<path d="M603,740.200 a1,1 0 0 1 1,-1 h7.500 l1.200,1.600 h11 a0.800,0.800 0 0 1 0.800,0.800 v14.200 a0.800,0.800 0 0 1 -0.800,0.800 h-19.900 a0.800,0.800 0 0 1 -0.800,-0.800 z" fill="#ffd560"/>
<path d="M603,740 a1,1 0 0 1 1,-1 h7.300 l0.900,1.300 l-0.900,0.700 h-8.300 z" fill="#eaa800"/>
<path d="M607.200,756.700 v-7 a0.800,0.800 0 0 1 0.800,-0.800 h12 a0.800,0.800 0 0 1 0.800,0.800 v7 h-3.700 v-4.600 h-6.200 v4.600 z" fill="#2e91de"/>
<!-- sketchup -->
<polygon points="653.200,739.600 667.600,736.800 673,742.400 671.600,753.600 657.600,758.700 655.200,751.200" fill="#e42526"/>
<polygon points="655.400,740.600 666.800,738.300 671.200,742.300 667.400,743.200 664.800,741 656.200,742.800" fill="#fff"/>
<polygon points="656.800,745.200 663.600,743.800 666.600,746.600 663.400,747.400 662,746.200 657.400,747.200" fill="#fff"/>
<polygon points="657.800,750.400 661.800,749.500 662.600,751.400 658.600,752.500" fill="#fff"/>
<!-- tray -->
<path d="M1123.300,751 L1129,745.200 L1134.700,751" fill="none" stroke="#fff" stroke-width="1.300"/>
<g fill="none" stroke="#fff" stroke-width="1.100">
<rect x="1150.600" y="745.400" width="9.400" height="6.400"/>
<path d="M1160.500,747.200 v2.800"/>
<path d="M1147.300,743.300 v2 M1149.100,743.300 v2 M1146.200,745.300 h4 v2.200 h-4 z M1148.200,747.500 v2.500 h2.400"/>
</g>
<rect x="1151.600" y="746.400" width="7.400" height="4.400" fill="#fff" opacity="0.35"/>
<g fill="none" stroke="#fff" stroke-width="1.100" opacity="0.950">
<path d="M1172.600,754.300 A11,11 0 0 1 1183.600,743.400" />
<path d="M1175.600,754.300 A8,8 0 0 1 1183.600,746.400" />
<path d="M1178.600,754.300 A5,5 0 0 1 1183.600,749.400" />
</g>
<circle cx="1182.600" cy="753.300" r="1.400" fill="#fff"/>
<path d="M1193,745.600 h2.600 l3.400,-3.200 v11.200 l-3.400,-3.200 h-2.600 z" fill="none" stroke="#fff" stroke-width="1.100" stroke-linejoin="round"/>
<path d="M1201.300,745.600 a3.600,3.600 0 0 1 0,4.800" fill="none" stroke="#fff" stroke-width="1"/>
<path d="M1203.600,743.600 a6.400,6.400 0 0 1 0,8.800" fill="none" stroke="#bbb" stroke-width="1"/>
<path d="M1205.900,741.800 a9,9 0 0 1 0,12.400" fill="none" stroke="#777" stroke-width="1"/>
<!-- notification -->
<path d="M1325.200,740.300 h15.600 v10.700 h-9.700 l-3.200,3.200 v-3.200 h-2.700 z" fill="#fff"/>
<path d="M1327.600,743.300 h10.800 M1327.600,745.800 h10.800 M1327.600,748.300 h10.800" stroke="#1f1c1c" stroke-width="0.900"/>
<circle cx="1340.600" cy="755.200" r="7.600" fill="#1f1c1c" stroke="#9a9a9a" stroke-width="1.200"/>
<rect x="1361" y="728" width="1" height="40" fill="#868483"/>
</svg>
<span class="t" style="left:1337.300px;top:750px;font-size:11.500px;color:#fff;font-weight:bold">1</span>

<span class="t" style="left:88.3px;top:741.8px;font-size:14px;letter-spacing:0.08px;color:#2b2b2b;">Type</span>
<span class="t" style="left:122.9px;top:741.8px;font-size:14px;letter-spacing:0.056px;color:#2b2b2b;">here</span>
<span class="t" style="left:156.3px;top:741.8px;font-size:14px;letter-spacing:0.812px;color:#2b2b2b;">to</span>
<span class="t" style="left:174.0px;top:741.8px;font-size:14px;letter-spacing:-0.106px;color:#2b2b2b;">search</span>
<span class="t" style="left:1219.6px;top:742.3px;font-size:11px;letter-spacing:-0.872px;color:#fff;">ENG</span><span class="t" style="left:1260.9px;top:733.0px;font-size:11.5px;letter-spacing:0.003px;color:#fff;">5:39</span>
<span class="t" style="left:1287.7px;top:733.0px;font-size:11.5px;letter-spacing:-2.85px;color:#fff;">PM</span><span class="t" style="left:1253.4px;top:750.6px;font-size:11.5px;letter-spacing:-0.056px;color:#fff;">11/22/2019</span>
</body></html>
